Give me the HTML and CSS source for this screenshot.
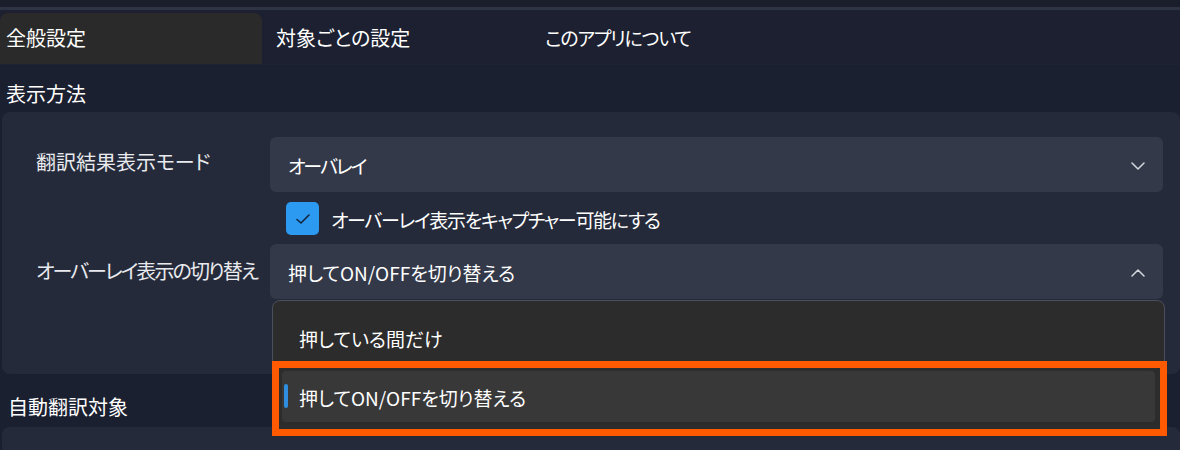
FILE: index.html
```html
<!DOCTYPE html>
<html lang="ja">
<head>
<meta charset="utf-8">
<link rel="stylesheet" href="styles.css">
</head>
<body>
<div class="app">
  <div class="topstrip"></div>
  <div class="topline"></div>
  <nav class="tabs">
    <div class="tab tab-active">全般設定</div>
    <div class="tab tab-second">対象ごとの設定</div>
    <div class="tab tab-third">このアプリについて</div>
  </nav>
  <h2 class="section-title">表示方法</h2>
  <section class="card">
    <div class="row">
      <div class="label label-first">翻訳結果表示モード</div>
      <div class="select">
        <span class="select-text select-text-mode">オーバレイ</span>
        <svg class="chev" width="14" height="8" viewBox="0 0 14 8"><path d="M1 1 L7 7 L13 1" fill="none" stroke="#d4d7de" stroke-width="1.5" stroke-linecap="round" stroke-linejoin="round"/></svg>
      </div>
    </div>
    <div class="row row-check">
      <div class="label"></div>
      <label class="check">
        <span class="box"><svg width="16" height="12" viewBox="0 0 16 12"><path d="M2 6.5 L6 10 L14 2" fill="none" stroke="#12233a" stroke-width="1.6" stroke-linecap="round" stroke-linejoin="round"/></svg></span>
        <span class="check-text">オーバーレイ表示をキャプチャー可能にする</span>
      </label>
    </div>
    <div class="row">
      <div class="label label-second">オーバーレイ表示の切り替え</div>
      <div class="select select-open">
        <span class="select-text">押してON/OFFを切り替える</span>
        <svg class="chev" width="14" height="8" viewBox="0 0 14 8"><path d="M1 7 L7 1 L13 7" fill="none" stroke="#d4d7de" stroke-width="1.5" stroke-linecap="round" stroke-linejoin="round"/></svg>
        <div class="popup">
          <div class="item">押している間だけ</div>
          <div class="item item-selected"><span class="indicator"></span>押してON/OFFを切り替える</div>
        </div>
        <div class="highlight"></div>
      </div>
    </div>
  </section>
  <h2 class="section-title section-title-2">自動翻訳対象</h2>
  <section class="card card-2"></section>
</div>
</body>
</html>
```

FILE: styles.css
```css
* { box-sizing: border-box; }
html, body {
  margin: 0;
  padding: 0;
  background: #1b2030;
}
body {
  width: 1180px;
  height: 450px;
  overflow: hidden;
  font-family: "Noto Sans CJK JP", "Noto Sans", sans-serif;
  font-feature-settings: "palt";
  color: #ffffff;
}
.app {
  display: flex;
  flex-direction: column;
}
.topstrip {
  height: 7px;
  background: #1a1e2b;
}
.topline {
  height: 3px;
  background: #2e3443;
}
.tabs {
  height: 55px;
  display: flex;
  align-items: flex-end;
  background: #1c2030;
  border-bottom: 1px solid #1e2232;
}
.tab {
  height: 51px;
  display: flex;
  align-items: center;
  font-size: 20px;
  line-height: 1;
  padding-bottom: 2px;
  color: #ffffff;
}
.tab-active {
  width: 262px;
  padding-left: 6px;
  background: #2a2a2a;
  border-radius: 8px 8px 0 0;
  font-feature-settings: normal;
}
.tab-second {
  width: 283px;
  padding-left: 14px;
}
.tab-third {
  letter-spacing: -1.2px;
  font-size: 19px;
}
.section-title {
  margin: 0;
  height: 47px;
  padding: 17px 0 0 6px;
  font-size: 20px;
  font-weight: 400;
  line-height: 24px;
  font-feature-settings: normal;
}
.section-title-2 {
  height: 53px;
  padding: 21px 0 0 8px;
}
.card {
  margin: 0 0 0 2px;
  height: 262px;
  background: #252a3a;
  border-radius: 8px;
  padding: 25px 17px 0 0;
  display: flex;
  flex-direction: column;
}
.card-2 {
  height: 40px;
  padding: 0;
}
.row {
  display: flex;
  align-items: center;
}
.label {
  width: 268px;
  padding-left: 34px;
  font-size: 19px;
  color: #e9eaee;
  line-height: 1;
  white-space: nowrap;
}
.label-first {
  margin-top: -6px;
  font-size: 20px;
}
.label-second {
  margin-top: -2px;
  font-size: 20px;
  letter-spacing: -1.9px;
}
.select {
  flex: 1;
  height: 55px;
  background: #333949;
  border-radius: 6px;
  display: flex;
  align-items: center;
  justify-content: space-between;
  padding: 2px 18px 0 18px;
  position: relative;
}
.select-text {
  font-size: 19px;
  line-height: 1;
}
.select-text-mode {
  letter-spacing: -2px;
}
.chev {
  margin-right: 0;
}
.row-check {
  height: 33px;
  margin: 10px 0 9px;
}
.check {
  display: flex;
  align-items: center;
  padding-left: 16px;
}
.box {
  width: 33px;
  height: 33px;
  border-radius: 5px;
  background: #2c9af1;
  display: flex;
  align-items: center;
  justify-content: center;
}
.check-text {
  margin-left: 12px;
  font-size: 19px;
  line-height: 1;
  padding-top: 1px;
  letter-spacing: -1.3px;
}
.popup {
  position: absolute;
  left: 2px;
  right: -2px;
  top: 56px;
  height: 135px;
  background: #2c2c2c;
  border: 1px solid #4b4f5b;
  border-radius: 8px;
  padding: 12px 9px 0 9px;
  display: flex;
  flex-direction: column;
  gap: 7px;
  z-index: 2;
}
.item {
  height: 51px;
  display: flex;
  align-items: center;
  padding-left: 17px;
  font-size: 19px;
  line-height: 1;
  border-radius: 4px;
  position: relative;
}
.item-selected {
  background: #383838;
  padding-top: 2px;
}
.indicator {
  position: absolute;
  left: 2px;
  top: 13px;
  width: 4px;
  height: 24px;
  border-radius: 2px;
  background: #2f8ee0;
}
.highlight {
  position: absolute;
  left: 2px;
  right: -4px;
  top: 117px;
  height: 75px;
  border: 7px solid #ff5a00;
  z-index: 3;
}
```
